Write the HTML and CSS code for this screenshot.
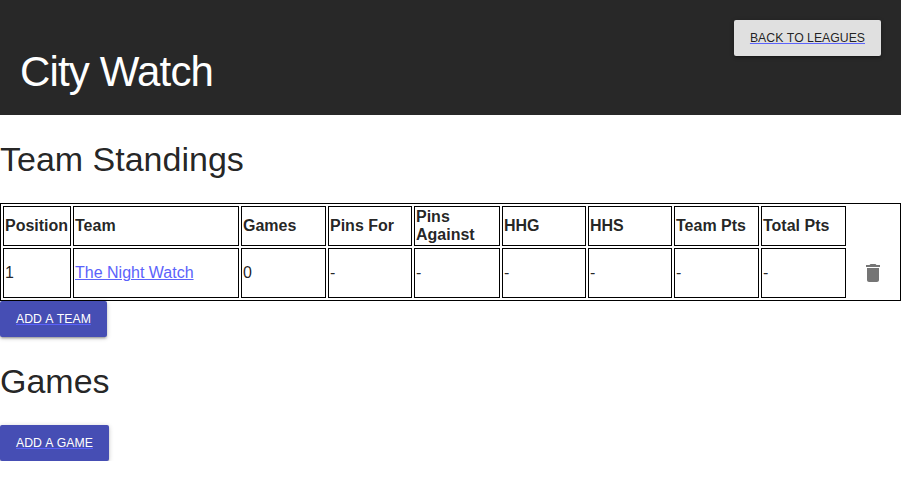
FILE: index.html
```html
<!DOCTYPE html>
<html lang="en">
<head>
<meta charset="utf-8">
<title>City Watch</title>
<link rel="stylesheet" href="styles.css">
</head>
<body>
<header class="banner">
  <h1 class="banner-title">City Watch</h1>
  <a class="button button-default" href="#"><span>Back to leagues</span></a>
</header>
<main>
  <h2 class="heading">Team Standings</h2>
  <table class="standings">
    <colgroup><col class="c-pos"><col class="c-team"><col class="c-games"><col class="c-for"><col class="c-against"><col class="c-hhg"><col class="c-hhs"><col class="c-tpts"><col class="c-total"><col class="c-action"></colgroup>
    <thead>
      <tr><th>Position</th><th>Team</th><th>Games</th><th>Pins For</th><th>Pins Against</th><th>HHG</th><th>HHS</th><th>Team Pts</th><th>Total Pts</th></tr>
    </thead>
    <tbody>
      <tr><td>1</td><td><a class="team-link" href="#">The Night Watch</a></td><td>0</td><td>-</td><td>-</td><td>-</td><td>-</td><td>-</td><td>-</td>
        <td class="action"><button class="icon-button" aria-label="Delete"><svg viewBox="0 0 24 24" width="24" height="24"><path d="M6 19c0 1.1.9 2 2 2h8c1.1 0 2-.9 2-2V7H6v12zM19 4h-3.5l-1-1h-5l-1 1H5v2h14V4z"/></svg></button></td></tr>
    </tbody>
  </table>
  <a class="button button-primary" href="#"><span>Add a team</span></a>
  <h2 class="heading">Games</h2>
  <a class="button button-primary" href="#"><span>Add a game</span></a>
</main>
</body>
</html>
```

FILE: styles.css
```css
* { box-sizing: border-box; }
body { margin: 0; background: #fff; color: rgba(0,0,0,.87); font: 16px "Liberation Sans", Arial, sans-serif; }
.banner { display: flex; justify-content: space-between; align-items: flex-start; height: 115px; padding: 20px; background: #282828; }
.banner-title { margin: 24px 0 0; color: #fff; font-size: 42px; font-weight: 400; line-height: 56px; letter-spacing: -.84px; }
.button { display: flex; align-items: center; width: fit-content; height: 36px; padding: 0 16px; border-radius: 2px; font-size: 12.25px; font-kerning: none; text-transform: uppercase; text-decoration: underline #5b62fb; text-decoration-skip-ink: none; white-space: nowrap; box-shadow: 0 1px 5px rgba(0,0,0,.2), 0 2px 2px rgba(0,0,0,.14), 0 3px 1px -2px rgba(0,0,0,.12); }
.button-default { background: #e0e0e0; color: rgba(0,0,0,.87); }
.button-primary { background: #464eb4; color: #fff; }
.heading { margin: 24px 0 23px; font-size: 34px; font-weight: 400; line-height: 41px; }
.standings { width: 901px; height: 98px; table-layout: fixed; border: 1px solid #000; border-collapse: separate; border-spacing: 2px; line-height: 18px; }
.standings th, .standings td { padding: 1px; border: 1px solid #000; text-align: left; vertical-align: middle; }
.standings th { height: 40px; }
.standings td { height: 50px; }
.standings .action { padding: 0 0 0 1px; border: 0; }
.c-pos { width: 68px; }
.c-team { width: 166px; }
.c-games { width: 85px; }
.c-for { width: 84px; }
.c-against { width: 86px; }
.c-hhg { width: 84px; }
.c-hhs { width: 84px; }
.c-tpts { width: 85px; }
.c-total { width: 85px; }
.c-action { width: 50px; }
.team-link { color: #5b62fb; }
.icon-button { display: flex; align-items: center; justify-content: center; width: 48px; height: 48px; padding: 0; border: 0; background: none; }
.icon-button svg { fill: rgba(0,0,0,.54); }
```
